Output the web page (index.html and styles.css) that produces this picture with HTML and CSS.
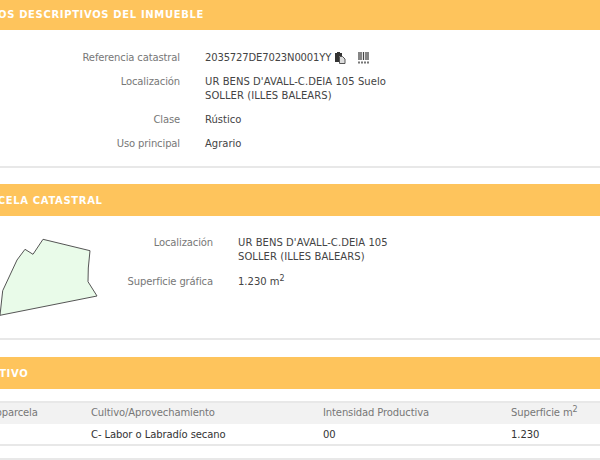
FILE: index.html
```html
<!DOCTYPE html>
<html lang="en">
<head>
    <meta charset="UTF-8">
    <title>Consulta descriptiva</title>
    <link rel="stylesheet" href="styles.css">
</head>
<body>
    <div class="page">
        <div class="panel panel-first">
            <div class="panel-title"><span class="title-first">DATOS DESCRIPTIVOS DEL INMUEBLE</span></div>
            <div class="panel-body details">
                <div class="label">Referencia catastral</div>
                <div class="value ref">2035727DE7023N0001YY
                    <svg class="icon-copy" width="11" height="12" viewBox="0 0 11 12">
                        <path d="M0 1h2V0h3v1h2v3H4v6H0z" fill="#333"/>
                        <path d="M4.500 4.500h3l2.500 2.500v4.500H4.500z" fill="#ddd" stroke="#555"/>
                    </svg>
                    <svg class="icon-bars" width="11" height="12" viewBox="0 0 11 12">
                        <path d="M1 0v8M3 0v8M5.500 0v8M8 0v8M10 0v8" stroke="#444" stroke-width="1.300"/>
                        <path d="M0 10.500h11" stroke="#777" stroke-width="2" stroke-dasharray="2 1"/>
                    </svg>
                </div>
                <div class="label">Localización</div>
                <div class="value address">UR BENS D'AVALL-C.DEIA 105 Suelo<br>SOLLER (ILLES BALEARS)</div>
                <div class="label">Clase</div>
                <div class="value">Rústico</div>
                <div class="label">Uso principal</div>
                <div class="value">Agrario</div>
            </div>
        </div>

        <div class="panel panel-second">
            <div class="panel-title"><span class="title-second">PARCELA CATASTRAL</span></div>
            <div class="panel-body parcel">
                <svg class="parcel-map" width="110" height="95" viewBox="0 0 110 95">
                    <path d="M43 9.300 L90 20.700 L88.300 38 L88 51.700 L97 66 L0 85.300 L2.700 60.700 L17 30 L25 19.300 L33 24.300 Z" fill="#e9fbe9" stroke="#555" stroke-width="1"/>
                </svg>
                <div class="details details-parcel">
                    <div class="label">Localización</div>
                    <div class="value address">UR BENS D'AVALL-C.DEIA 105<br>SOLLER (ILLES BALEARS)</div>
                    <div class="label">Superficie gráfica</div>
                    <div class="value">1.230 m<sup>2</sup></div>
                </div>
            </div>
        </div>

        <div class="panel panel-third">
            <div class="panel-title"><span class="title-third">CULTIVO</span></div>
            <div class="crops">
                <div class="crop-row crop-head">
                    <div class="col-sub"><span class="sub-head">Subparcela</span></div>
                    <div class="col-crop">Cultivo/Aprovechamiento</div>
                    <div class="col-int">Intensidad Productiva</div>
                    <div>Superficie m<sup>2</sup></div>
                </div>
                <div class="crop-row crop-data">
                    <div class="col-sub"></div>
                    <div class="col-crop">C- Labor o Labradío secano</div>
                    <div class="col-int">00</div>
                    <div>1.230</div>
                </div>
            </div>
        </div>
    </div>
    <div class="footer-line"></div>
</body>
</html>
```

FILE: styles.css
```css
html, body {
    margin: 0;
    padding: 0;
    height: 460px;
    overflow: hidden;
    background: #fff;
    font-family: "DejaVu Sans", Verdana, sans-serif;
    font-size: 10px;
    color: #333;
}

.panel {
    border-bottom: 2px solid #e8e8e8;
}

.panel-title {
    background: #fec45c;
    color: #fff;
    font-weight: bold;
    font-size: 10px;
    letter-spacing: 0.65px;
    height: 32px;
    line-height: 33px;
    white-space: nowrap;
    overflow: hidden;
}

.panel-first .panel-title {
    height: 30px;
    line-height: 29px;
}

.title-first {
    margin-left: -26px;
}

.title-second {
    margin-left: -26px;
}

.title-third {
    margin-left: -23px;
}

.panel-first {
    height: 166px;
    margin-bottom: 16px;
}

.panel-second {
    height: 154px;
    margin-bottom: 17px;
}

.panel-third {
    border-bottom: none;
}

.details {
    display: grid;
    grid-template-columns: 180px 1fr;
    column-gap: 25px;
    row-gap: 10px;
    padding-top: 21px;
    line-height: 14px;
}

.label {
    text-align: right;
    color: #777;
    letter-spacing: -0.13px;
}

.value {
    color: #444;
}

.address {
    letter-spacing: 0.06px;
}

.ref {
    display: flex;
    align-items: center;
    white-space: nowrap;
    letter-spacing: -0.15px;
}

.icon-copy {
    margin-left: 4px;
}

.icon-bars {
    margin-left: 12px;
}

sup {
    font-size: 8px;
    line-height: 0;
}

.parcel {
    display: flex;
}

.parcel-map {
    flex: none;
    margin-top: 14px;
}

.details-parcel {
    grid-template-columns: 103px 1fr;
    row-gap: 11px;
    padding-top: 20px;
    align-self: flex-start;
}

.crops {
    margin-top: 12px;
    border-top: 2px solid #e8e8e8;
    border-bottom: 2px solid #e8e8e8;
}

.crop-row {
    display: flex;
    white-space: nowrap;
    letter-spacing: -0.08px;
}

.crop-data {
    height: 20px;
    line-height: 21px;
}

.crop-head {
    background: #f2f2f2;
    color: #777;
    height: 21px;
    line-height: 20px;
    letter-spacing: -0.12px;
}

.col-sub {
    width: 91px;
    overflow: hidden;
}

.sub-head {
    margin-left: -17px;
}

.col-crop {
    width: 232px;
}

.col-int {
    width: 188px;
}

.footer-line {
    border-top: 2px solid #e8e8e8;
    margin-top: 12px;
}
```
